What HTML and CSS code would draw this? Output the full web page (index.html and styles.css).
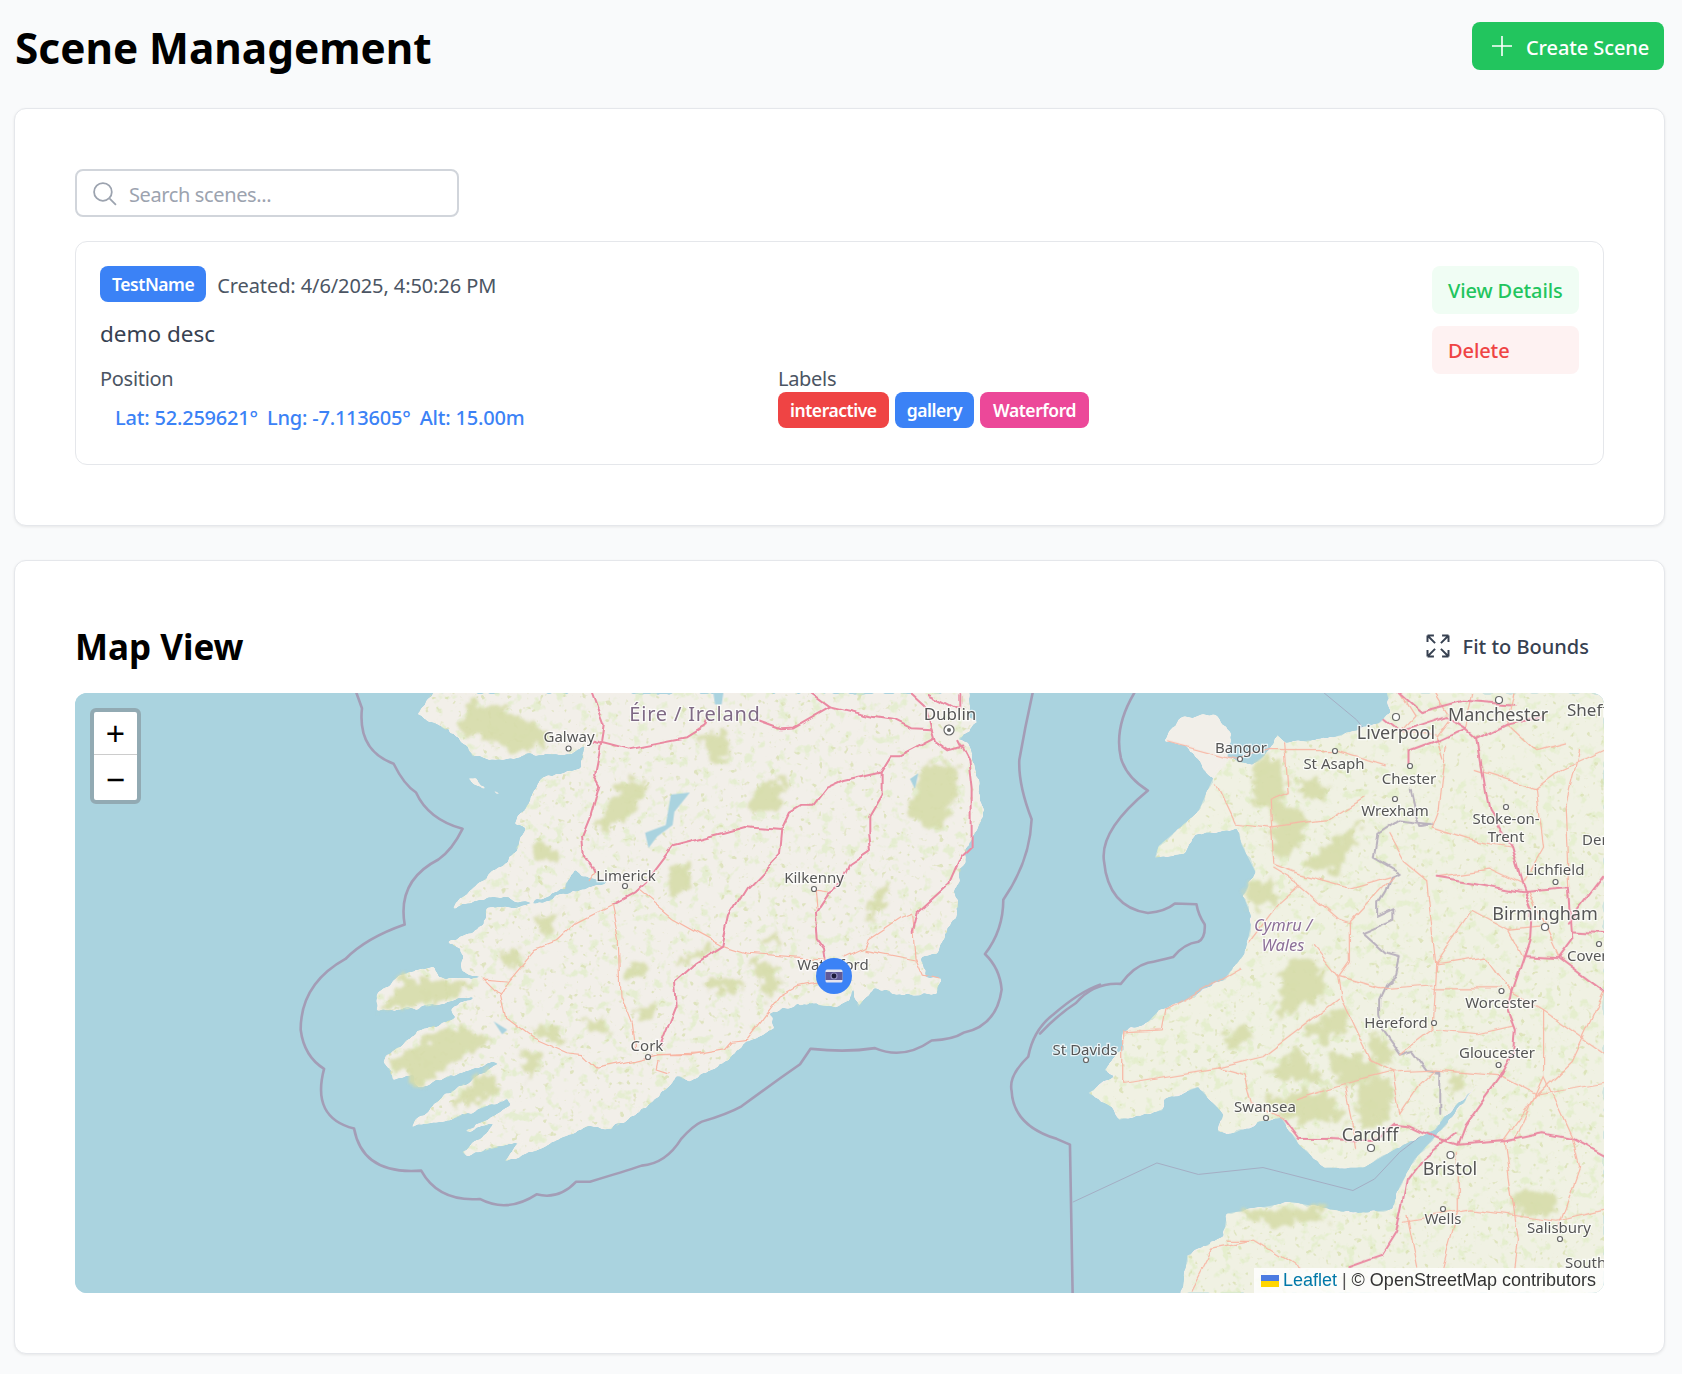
FILE: index.html
```html
<!DOCTYPE html>
<html lang="en">
<head>
<meta charset="utf-8">
<title>Scene Management</title>
<link rel="stylesheet" href="styles.css">
</head>
<body>
<header class="page-head">
  <h1 class="page-title">Scene Management</h1>
  <button class="create-btn">
    <svg class="plus-icon" viewBox="0 0 24 24"><path d="M12 2v20M2 12h20"/></svg>
    <span>Create Scene</span>
  </button>
</header>

<section class="panel">
  <label class="search">
    <svg class="search-icon" viewBox="0 0 24 24"><circle cx="10.5" cy="10.5" r="8.5"/><path d="M17 17l6 6"/></svg>
    <span class="search-text">Search scenes...</span>
  </label>
  <article class="scene">
    <div class="scene-main">
      <div class="scene-top">
        <span class="tag tag-blue">TestName</span>
        <span class="created">Created: 4/6/2025, 4:50:26 PM</span>
      </div>
      <p class="desc">demo desc</p>
      <div class="scene-cols">
        <div>
          <div class="col-label">Position</div>
          <div class="coords"><span>Lat: 52.259621°</span><span>Lng: -7.113605°</span><span>Alt: 15.00m</span></div>
        </div>
        <div>
          <div class="col-label">Labels</div>
          <div class="tags">
            <span class="tag tag-red">interactive</span>
            <span class="tag tag-blue">gallery</span>
            <span class="tag tag-pink">Waterford</span>
          </div>
        </div>
      </div>
    </div>
    <div class="actions">
      <button class="act act-green">View Details</button>
      <button class="act act-red">Delete</button>
    </div>
  </article>
</section>

<section class="panel map-panel">
  <div class="map-head">
    <h2 class="map-title">Map View</h2>
    <button class="fit-btn">
      <svg class="fit-icon" viewBox="0 0 24 24"><path d="M3 3v5.500M3 3h5.500M3 3l6.500 6.500M3 21v-5.500M3 21h5.500M3 21l6.500-6.500M21 3h-5.500M21 3v5.500M21 3l-6.500 6.500M21 21h-5.500M21 21v-5.500M21 21l-6.500-6.500"/></svg>
      <span>Fit to Bounds</span>
    </button>
  </div>
  <div class="map">
    <svg class="map-svg" viewBox="75 693 1529 600" preserveAspectRatio="none">
      <defs>
        <filter id="coast" x="-3%" y="-3%" width="106%" height="106%" color-interpolation-filters="sRGB">
          <feTurbulence type="fractalNoise" baseFrequency="0.09" numOctaves="3" seed="3" result="n"/>
          <feDisplacementMap in="SourceGraphic" in2="n" scale="7" xChannelSelector="R" yChannelSelector="G"/>
          <feGaussianBlur stdDeviation="1.300"/>
          <feComponentTransfer><feFuncA type="linear" slope="5" intercept="-2"/></feComponentTransfer>
        </filter>
        <filter id="soft" x="-5%" y="-5%" width="110%" height="110%" color-interpolation-filters="sRGB">
          <feTurbulence type="fractalNoise" baseFrequency="0.1" numOctaves="3" seed="11" result="n"/>
          <feDisplacementMap in="SourceGraphic" in2="n" scale="22" xChannelSelector="R" yChannelSelector="G"/>
          <feGaussianBlur stdDeviation="1.600"/>
        </filter>
        <filter id="wiggle" x="-2%" y="-2%" width="104%" height="104%" color-interpolation-filters="sRGB">
          <feTurbulence type="fractalNoise" baseFrequency="0.035" numOctaves="2" seed="5" result="n"/>
          <feDisplacementMap in="SourceGraphic" in2="n" scale="9" xChannelSelector="R" yChannelSelector="G"/>
          <feGaussianBlur stdDeviation="0.350"/>
        </filter>
        <filter id="speck" x="0" y="0" width="100%" height="100%" color-interpolation-filters="sRGB">
          <feTurbulence type="fractalNoise" baseFrequency="0.09" numOctaves="3" seed="7"/>
          <feColorMatrix type="matrix" values="0 0 0 0 0.88  0 0 0 0 0.93  0 0 0 0 0.78  0 0 0 6 -3.4"/>
          <feGaussianBlur stdDeviation="0.600"/>
        </filter>
        <filter id="speck2" x="0" y="0" width="100%" height="100%" color-interpolation-filters="sRGB">
          <feTurbulence type="fractalNoise" baseFrequency="0.16" numOctaves="2" seed="21"/>
          <feColorMatrix type="matrix" values="0 0 0 0 0.84  0 0 0 0 0.87  0 0 0 0 0.68  0 0 0 9 -6"/>
          <feGaussianBlur stdDeviation="0.500"/>
        </filter>
        <polygon id="ie-west" points="440,0 395,60 430,70 520,115 560,165 650,175 720,160 840,160 880,140 875,200 760,220 720,290 680,340 715,350 690,400 650,450 620,465 490,565 620,530 730,550 830,510 850,455 880,480 960,495 830,525 750,552 600,562 590,610 520,640 485,650 525,670 530,730 590,745 560,745 460,745 445,715 350,735 280,790 280,830 400,825 570,790 490,830 510,850 400,885 300,955 330,1010 385,1000 400,1030 600,970 640,965 480,1050 430,1090 375,1130 480,1120 660,1060 670,1080 530,1150 640,1120 530,1200 540,1210 700,1170 650,1225 760,1190 900,1130 960,1140 1040,1100 1140,1020 1150,1000 1190,1015 1300,960 1340,920 1430,880 1420,840 1500,815 1568,810 1568,0"/>
        <polygon id="ie-east" points="585,0 1050,0 1045,60 1075,75 1015,125 1045,130 1075,230 1090,325 1045,400 1005,510 1015,560 1000,590 950,680 905,690 915,740 960,745 950,785 850,790 760,770 715,820 700,790 700,755 690,805 650,820 590,815"/>
        <polygon id="gb" points="965,0 975,50 940,80 800,120 680,130 660,110 640,150 590,190 530,170 480,225 440,310 330,400 320,430 400,420 430,370 550,355 560,395 600,470 565,530 590,590 570,680 510,750 390,810 330,830 290,870 230,885 230,925 180,985 210,1000 135,1045 205,1085 220,1115 340,1090 345,1060 440,1030 510,1100 495,1145 540,1150 610,1120 670,1110 720,1180 790,1240 900,1240 990,1190 1100,1140 1125,1105 1220,1020 1140,1115 1040,1220 1000,1290 980,1350 870,1360 700,1330 520,1360 510,1420 410,1470 395,1568 1568,1568 1568,0"/>
        <polygon id="anglesey" points="345,125 390,65 490,58 530,110 525,170 480,225 410,140"/>
        <clipPath id="landclip">
          <use href="#ie-west" transform="translate(280 693) scale(.3444 .3827)"/>
          <use href="#ie-east" transform="translate(620 693) scale(.3333 .3827)"/>
          <use href="#gb" transform="translate(1040 693) scale(.3597 .3827)"/>
        </clipPath>
      </defs>
      <rect class="sea" x="75" y="693" width="1529" height="600"/>

      <g class="z10">
        <path class="mar" d="M222,0 L238,40 Q225,150 330,185 Q360,240 395,260 Q430,330 530,355 Q500,410 460,435 Q340,490 362,605 Q250,640 190,695 Q60,760 60,880 Q70,950 128,982 Q90,1110 215,1138 Q240,1260 410,1248 Q460,1330 580,1322 Q660,1360 745,1310 Q810,1325 860,1277 L900,1277 Q1000,1250 1050,1235 Q1120,1230 1165,1165 Q1200,1130 1225,1120 Q1300,1100 1340,1080 Q1430,1020 1510,970 L1540,930"/>
      </g>
      <g class="z11">
        <path class="mar" d="M575,930 Q680,940 765,928 Q850,960 935,908 Q1000,905 1030,888 Q1130,870 1145,775 Q1140,720 1095,682 Q1150,620 1150,540 Q1230,440 1235,330 Q1195,240 1198,175 Q1215,90 1238,0"/>
        <path class="mar" d="M1440,762 Q1380,780 1300,840 Q1240,880 1225,950 Q1165,1000 1175,1040 Q1180,1130 1310,1165 L1350,1180 L1358,1568"/>
      </g>
      <g class="z12">
        <path class="mar" d="M262,0 Q205,90 225,170 Q240,220 300,255 Q165,360 178,440 Q190,560 300,575 Q350,570 375,550 L435,552 Q440,580 458,605 Q460,640 440,650 Q400,655 370,690 Q330,700 300,705 Q260,715 225,760 Q150,755 100,810 Q50,840 0,890"/>
        <polyline class="thin-mar" points="92,1330 325,1228 440,1258 620,1240 870,1300 930,1270 1000,1200 1110,1120"/>
        <polyline class="thin-mar" points="790,0 880,70 950,150"/>
      </g>

      <g class="land" filter="url(#coast)">
        <use href="#ie-west" transform="translate(280 693) scale(.3444 .3827)"/>
        <use href="#ie-east" transform="translate(620 693) scale(.3333 .3827)"/>
        <use href="#gb" transform="translate(1040 693) scale(.3597 .3827)"/>
        <use href="#anglesey" transform="translate(1040 693) scale(.3597 .3827)"/>
        <g class="z10">
          <polygon points="530,218 570,225 605,250 580,245"/><polygon points="615,250 635,262 625,268"/><polygon points="645,268 658,275 648,278"/>
          <polygon points="650,1225 675,1210 660,1222"/>
        </g>
      </g>
      <use class="gb-tint" href="#gb" transform="translate(1040 693) scale(.3597 .3827)"/>
      <rect class="speck-layer" x="75" y="693" width="1529" height="600" filter="url(#speck)" clip-path="url(#landclip)"/>
      <rect class="speck-layer" x="75" y="693" width="1529" height="600" filter="url(#speck2)" clip-path="url(#landclip)"/>

      <g class="greens" filter="url(#soft)">
        <g class="z10">
          <polygon points="550,20 640,40 760,90 790,130 680,160 600,120 520,110"/>
          <polygon points="1000,220 1060,240 1040,300 950,360 920,350 960,280"/>
          <polygon points="1420,230 1470,250 1420,310 1370,320 1370,270"/>
          <polygon points="740,395 790,400 810,440 730,440"/>
          <polygon points="350,735 400,750 570,760 480,805 290,830 340,770"/>
          <polygon points="500,870 620,900 520,960 400,1030 310,960"/>
          <polygon points="600,980 650,1040 500,1085 530,1040"/>
          <polygon points="1150,700 1250,660 1270,670 1200,700 1150,710"/>
          <polygon points="1000,710 1070,720 1060,745 1010,740"/>
          <polygon points="1230,745 1340,750 1320,790 1240,770"/>
          <polygon points="1360,700 1450,710 1450,770 1410,800 1390,740"/>
          <polygon points="730,870 810,875 820,910 750,900"/>
          <polygon points="880,860 950,850 950,880 900,890"/>
          <polygon points="1030,820 1090,815 1090,850 1040,860"/>
          <polygon points="1130,450 1190,440 1200,510 1130,530"/>
          <polygon points="700,930 760,950 720,1015"/>
          <polygon points="640,680 700,670 690,720 650,720"/>
          <polygon points="740,580 810,570 800,620 760,630"/>
        </g>
        <g class="z11">
          <polygon points="920,180 1010,190 1000,280 950,370 860,310"/>
          <polygon points="400,240 500,225 480,300 390,320"/>
          <polygon points="760,510 810,500 770,580 740,610"/>
          <polygon points="430,630 480,625 470,655 430,655"/>
          <polygon points="230,110 300,100 340,170 270,180"/>
        </g>
        <g class="z12">
          <polygon points="600,180 670,170 690,260 640,300 590,280"/>
          <polygon points="710,225 800,235 790,280 720,265"/>
          <polygon points="640,280 740,310 730,400 650,440"/>
          <polygon points="720,450 900,330 830,470"/>
          <polygon points="570,510 650,480 660,540 590,570"/>
          <polygon points="680,700 770,690 800,780 660,860"/>
          <polygon points="730,880 840,820 870,870 790,910"/>
          <polygon points="520,880 580,860 580,920 520,930"/>
          <polygon points="630,1000 720,930 800,1030"/>
          <polygon points="800,940 920,960 960,1000 830,1030"/>
          <polygon points="620,1060 800,1040 850,1120 720,1120"/>
          <polygon points="880,1020 980,1000 970,1120 890,1130"/>
          <polygon points="920,890 970,910 980,980 920,960"/>
          <polygon points="1140,990 1180,990 1180,1040 1140,1040"/>
          <polygon points="540,1360 780,1340 800,1380 650,1390"/>
          <polygon points="1310,1310 1440,1300 1430,1370 1320,1350"/>
        </g>
      </g>

      <g class="water-bits">
        <g class="z10"><polygon points="1135,265 1190,260 1145,310 1140,345 1095,375 1070,405 1060,365 1120,345"/><polygon points="620,858 660,880 645,892"/></g>
        <g class="z11"><polygon points="280,0 310,0 305,30 285,30"/><polygon points="870,225 895,210 885,250"/></g>
      </g>

      <g filter="url(#wiggle)">
        <g class="z10">
          <polyline class="rd2" points="1040,515 1140,590 1220,630 1285,662"/>
          <polyline class="rd2" points="965,550 985,640 990,790 1020,860 1030,930"/>
          <polyline class="rd2" points="970,550 860,600 800,650 740,670 665,750 640,790 590,745 660,750"/>
          <polyline class="rd2" points="640,790 655,850 730,900 830,940 880,945 920,980 1030,960 1100,945 1230,940"/>
          <polyline class="rd2" points="1100,960 1095,980 1130,990"/>
          <polyline class="rd2" points="895,490 910,470"/>
          <polyline class="rd1" points="910,125 1010,148 1180,118 1230,90 1240,70"/>
          <polyline class="rd1" points="905,0 940,85 925,170 915,215 930,240 905,320 880,375 885,430 910,470"/>
          <polyline class="rd1" points="970,550 1030,520 1060,495 1140,400 1290,365 1350,350 1458,358"/>
        </g>
        <g class="z11">
          <polyline class="rd2" points="310,660 380,680 530,690 620,695"/>
          <polyline class="rd2" points="675,690 735,665 745,645 840,590 875,578 885,690 910,740 955,750"/>
          <polyline class="rd2" points="735,670 885,695"/>
          <polyline class="rd2" points="590,755 530,765 480,790 420,860 380,905 330,910 310,930 210,945 110,945"/>
          <polyline class="rd2" points="580,515 585,560"/><polyline class="rd2" points="580,515 620,520"/>
          <polyline class="rd1" points="415,72 480,92 520,90 630,35 760,62 820,70 870,92 935,95"/>
          <polyline class="rd1" points="575,0 630,35"/>
          <polyline class="rd1" points="870,0 920,40 935,95"/><polyline class="rd1" points="925,0 1015,40 1015,0"/>
          <polyline class="rd1" points="935,95 945,125 985,150 1030,140"/>
          <polyline class="rd1" points="487,357 510,315 545,297 578,297 620,250 670,230 785,208 815,165 840,165 940,120"/>
          <polyline class="rd1" points="487,357 480,420 380,510 330,580 310,660 230,705 165,755 170,815 120,925"/>
          <polyline class="rd1" points="785,208 785,260 745,320 745,380 750,415 690,450 665,500 620,525 585,570 590,640 615,670 620,700"/>
          <polyline class="rd1" points="1015,125 1045,175 1055,250 1055,400 1020,430 985,500 890,575 875,630"/>
        </g>
        <g class="z12">
          <polyline class="border" points="1028,250 1040,300 1060,345 1090,340 1000,330 935,370 925,430 1000,470 975,480 960,520 940,550 940,585 985,565 985,595 900,630 960,680 1000,690 990,735 960,760 940,800 940,840 950,880 1000,945 1035,935 1075,985 1110,990 1110,1100"/>
          <polyline class="rd2" points="355,125 550,175 640,150 820,150 960,190"/>
          <polyline class="rd2" points="490,240 540,340 640,350 800,330 900,270"/>
          <polyline class="rd2" points="680,130 690,260 640,280 650,450 720,475 860,510 970,480"/>
          <polyline class="rd2" points="650,460 720,500 660,550 580,650"/>
          <polyline class="rd2" points="720,500 830,590 860,600 980,480"/>
          <polyline class="rd2" points="860,600 860,700 830,740 840,800 880,880 920,960 980,990 1100,985"/>
          <polyline class="rd2" points="760,660 830,740 940,770 1090,760"/>
          <polyline class="rd2" points="830,800 620,950 490,980 230,1020 230,885 340,880 350,830 560,720"/>
          <polyline class="rd2" points="490,980 570,1000 590,1070 680,1115"/>
          <polyline class="rd2" points="710,1060 850,1020 980,990 1000,1100"/>
          <polyline class="rd2" points="850,1030 870,1120 880,1190"/>
          <polyline class="rd2" points="1075,490 1100,710 1090,880 1000,945"/>
          <polyline class="rd2" points="970,370 1010,440 1075,490"/>
          <polyline class="rd2" points="1100,710 1240,690 1310,780"/>
          <polyline class="rd2" points="1090,770 1280,770"/>
          <polyline class="rd2" points="1100,880 1220,890 1315,870"/>
          <polyline class="rd2" points="1280,1000 1380,1050 1568,1020"/>
          <polyline class="rd2" points="1380,1050 1480,960 1568,780"/>
          <polyline class="rd2" points="1310,780 1400,830 1568,940"/>
          <polyline class="rd2" points="1400,1000 1320,1170"/>
          <polyline class="rd2" points="1340,500 1250,460 1100,480"/>
          <polyline class="rd2" points="1010,1380 1200,1350 1440,1380 1568,1350"/>
          <polyline class="rd2" points="1440,1400 1500,1240 1480,1165"/>
          <polyline class="rd2" points="1160,1200 1160,1360 1120,1500"/>
          <polyline class="rd2" points="1290,1170 1330,1430 1320,1500"/>
          <polyline class="rd2" points="1130,130 1110,300 1090,350 1190,380 1310,400"/>
          <polyline class="rd2" points="1210,200 1380,250 1450,200 1568,150"/>
          <polyline class="rd2" points="1380,250 1400,400 1340,500"/>
          <polyline class="rd2" points="1470,510 1460,300 1500,150"/>
          <polyline class="rd2" points="520,1430 600,1430 720,1500"/>
          <polyline class="rd2" points="590,1430 480,1450 420,1560"/>
          <polyline class="rd2" points="1000,0 1040,60 1000,100 1100,110"/>
          <polyline class="rd2" points="1100,0 1140,60 1100,110 1120,170"/>
          <polyline class="rd2" points="1200,0 1180,90"/><polyline class="rd2" points="1320,0 1300,80 1380,150 1460,130"/>
          <polyline class="rd2" points="1340,690 1300,620 1200,570 1100,710"/>
          <polyline class="rd2" points="1400,610 1360,520"/><polyline class="rd2" points="1400,610 1440,690"/><polyline class="rd2" points="1400,610 1300,620"/>
          <polyline class="rd2" points="1000,1100 1050,1030 1100,985 1280,1000"/>
          <polyline class="rd2" points="1160,1180 1290,1170 1380,1050"/>
          <polyline class="rd2" points="1480,1165 1400,1000 1400,830"/>
          <polyline class="rd2" points="1050,1500 1020,1360"/>
          <polyline class="rd1" points="1215,120 1240,260 1250,310 1310,400 1340,500 1365,560 1360,640 1310,780 1300,830 1320,880 1315,940 1280,1000 1180,1130 1160,1180 1110,1165 1030,1130 980,1125 920,1170 800,1165 720,1165 680,1115"/>
          <polyline class="rd1" points="1150,1150 1060,1220 1020,1270 1010,1320 990,1410 950,1470 860,1500"/>
          <polyline class="rd1" points="1160,1180 1300,1170 1400,1150 1480,1165 1568,1210"/>
          <polyline class="rd1" points="1100,480 1200,495 1340,520 1470,510 1480,640 1440,690 1568,780"/>
          <polyline class="rd1" points="1345,685 1440,690"/><polyline class="rd1" points="1480,620 1568,625"/><polyline class="rd1" points="1470,600 1568,480"/>
          <polyline class="rd1" points="1030,190 1030,150 1100,125 1180,90 1215,120 1300,80 1400,60"/>
          <polyline class="rd1" points="960,70 1000,100 1130,60 1180,90"/>
          <polyline class="rd1" points="1000,0 1060,50 1180,20 1320,30"/>
        </g>
      </g>

      <g class="dots">
        <circle cx="568.600" cy="748.500" r="2.500"/><circle cx="625" cy="886" r="2.500"/><circle cx="814" cy="889" r="2.500"/><circle cx="648" cy="1057" r="2.500"/><circle cx="1086" cy="1060" r="2.500"/><circle cx="1240" cy="759" r="2.500"/><circle cx="1335" cy="751" r="2.500"/><circle cx="1410" cy="766" r="2.500"/><circle cx="1395" cy="799" r="2.500"/><circle cx="1506" cy="807" r="2.500"/><circle cx="1555.500" cy="882" r="2.500"/><circle cx="1599" cy="944" r="2.500"/><circle cx="1501.500" cy="991" r="2.500"/><circle cx="1434" cy="1023" r="2.500"/><circle cx="1498.600" cy="1065" r="2.500"/><circle cx="1266" cy="1118" r="2.500"/><circle cx="1443" cy="1209" r="2.500"/><circle cx="1560" cy="1239" r="2.500"/>
        <circle cx="1396" cy="717" r="3.500"/><circle cx="1499" cy="700" r="3.500"/><circle cx="1545" cy="927" r="3.500"/><circle cx="1371" cy="1148" r="3.500"/><circle cx="1450.500" cy="1155" r="3.500"/>
        <circle cx="949" cy="730" r="5"/><circle class="dot-core" cx="949" cy="730" r="2"/>
      </g>

      <g class="labels">
        <text class="lb-country" x="695" y="721">Éire / Ireland</text>
        <text class="lb" x="569" y="742">Galway</text>
        <text class="lb" x="626" y="881">Limerick</text>
        <text class="lb" x="814" y="883">Kilkenny</text>
        <text class="lb" x="833" y="970">Waterford</text>
        <text class="lb" x="647" y="1051">Cork</text>
        <text class="lb-m" x="950" y="720">Dublin</text>
        <text class="lb" x="1085" y="1055">St Davids</text>
        <text class="lb" x="1241" y="753">Bangor</text>
        <text class="lb" x="1334" y="769">St Asaph</text>
        <text class="lb" x="1409" y="784">Chester</text>
        <text class="lb-l" x="1396" y="739">Liverpool</text>
        <text class="lb-l" x="1498" y="721">Manchester</text>
        <text class="lb-m lb-start" x="1567" y="716">Sheffield</text>
        <text class="lb" x="1395" y="816">Wrexham</text>
        <text class="lb" x="1506" y="824">Stoke-on-</text>
        <text class="lb" x="1506" y="842">Trent</text>
        <text class="lb lb-start" x="1582" y="845">Derby</text>
        <text class="lb" x="1555" y="875">Lichfield</text>
        <text class="lb-l" x="1545" y="920">Birmingham</text>
        <text class="lb lb-start" x="1567" y="961">Coventry</text>
        <text class="lb-region" x="1283" y="931">Cymru /</text>
        <text class="lb-region" x="1283" y="951">Wales</text>
        <text class="lb" x="1501" y="1008">Worcester</text>
        <text class="lb" x="1396" y="1028">Hereford</text>
        <text class="lb" x="1497" y="1058">Gloucester</text>
        <text class="lb" x="1265" y="1112">Swansea</text>
        <text class="lb-l" x="1370" y="1141">Cardiff</text>
        <text class="lb-l" x="1450" y="1175">Bristol</text>
        <text class="lb" x="1443" y="1224">Wells</text>
        <text class="lb" x="1559" y="1233">Salisbury</text>
        <text class="lb lb-start" x="1565" y="1268">Southampton</text>
      </g>
    </svg>

    <div class="zoom">
      <span class="zoom-btn zoom-plus">+</span>
      <span class="zoom-btn zoom-minus">−</span>
    </div>

    <div class="pin">
      <svg class="pin-icon" viewBox="0 0 18 14">
        <rect class="cam-top" x="0.500" y="0.500" width="17" height="13" rx="1.500"/>
        <rect class="cam-band" x="0.500" y="3" width="17" height="8"/>
        <circle class="cam-ring" cx="9" cy="7" r="3.600"/>
        <circle class="cam-lens" cx="9" cy="7" r="2.400"/>
      </svg>
    </div>

    <div class="attrib">
      <svg class="flag" viewBox="0 0 12 8"><rect width="12" height="4" fill="#4C7BE1"/><rect y="4" width="12" height="4" fill="#FFD500"/></svg>
      <a class="attrib-link">Leaflet</a><span class="attrib-sep">|</span><span>© OpenStreetMap contributors</span>
    </div>
  </div>
</section>
</body>
</html>
```
FILE: styles.css
```css
* { box-sizing: border-box; }
html, body { margin: 0; }
body {
  background: #f9fafb;
  color: #000;
  font-family: "Noto Sans", "Open Sans", sans-serif;
  padding: 0 17px 20px 14px;
}
button { font-family: inherit; border: 0; cursor: pointer; }

.page-head {
  display: flex;
  align-items: center;
  justify-content: space-between;
  height: 108px;
  padding-bottom: 16px;
}
.page-title {
  margin: 4px 0 0 1px;
  font-size: 42.300px;
  font-weight: 700;
  line-height: 52px;
  letter-spacing: 0;
}
.create-btn {
  display: flex;
  align-items: center;
  gap: 12px;
  width: 192px;
  height: 48px;
  margin-right: 1px;
  padding: 2px 0 0 18px;
  border-radius: 8px;
  background: #22c55e;
  color: #fff;
  font-size: 20px;
  font-weight: 500;
  letter-spacing: -0.1px;
  white-space: nowrap;
}
.plus-icon { width: 24px; height: 24px; margin-top: -2px; fill: none; stroke: #fff; stroke-width: 1.6; }

.panel {
  background: #fff;
  border: 1px solid #e5e7eb;
  border-radius: 12px;
  box-shadow: 0 1px 3px rgba(0, 0, 0, .08);
  padding: 60px;
  height: 418px;
}
.map-panel { height: 794px; margin-top: 34px; }

.search {
  display: flex;
  align-items: center;
  gap: 12px;
  width: 384px;
  height: 48px;
  padding-left: 16px;
  border: 2px solid #d1d5db;
  border-radius: 8px;
}
.search-icon { width: 25px; height: 25px; margin-left: -1px; fill: none; stroke: #9ca3af; stroke-width: 1.7; }
.search-text { margin-top: 2px; color: #9ca3af; font-size: 20px; letter-spacing: -0.38px; }

.scene {
  display: flex;
  margin-top: 24px;
  height: 224px;
  padding: 24px;
  border: 1px solid #e5e7eb;
  border-radius: 12px;
}
.scene-main { flex: 1; min-width: 0; }
.scene-top { display: flex; align-items: center; gap: 11px; height: 36px; }
.tag {
  display: inline-flex;
  align-items: center;
  height: 36px;
  padding: 0 12px;
  border-radius: 8px;
  color: #fff;
  font-size: 17.500px;
  font-weight: 600;
  letter-spacing: -0.45px;
  white-space: nowrap;
}
.tag-blue { background: #3b82f6; }
.tag-red { background: #ef4444; }
.tag-pink { background: #ec4899; }
.created { margin-top: 3px; color: #4b5563; font-size: 20px; letter-spacing: -0.1px; }
.desc { margin: 15px 0 0; color: #374151; font-size: 22.500px; line-height: 34px; letter-spacing: 0; }
.scene-cols { display: grid; grid-template-columns: 1fr 1fr; gap: 24px; margin-top: 15px; }
.col-label { color: #4b5563; font-size: 20px; line-height: 26px; letter-spacing: -0.3px; }
.coords {
  display: flex;
  gap: 9px;
  margin-top: 12px;
  padding-left: 15px;
  color: #3b82f6;
  font-size: 20px;
  font-weight: 500;
  line-height: 28px;
  letter-spacing: -0.2px;
}
.tags { display: flex; gap: 6px; }
.tags .tag-pink { padding: 0 13px; }
.actions { display: flex; flex-direction: column; gap: 12px; width: 147px; }
.act {
  height: 48px;
  padding: 0 16px;
  border-radius: 8px;
  font-size: 20px;
  font-weight: 500;
  letter-spacing: -0.1px;
  text-align: left;
  white-space: nowrap;
}
.act-green { background: #f0fdf4; color: #22c55e; }
.act-red { background: #fef2f2; color: #ef4444; }

.map-head {
  display: flex;
  align-items: center;
  justify-content: space-between;
  height: 72px;
  padding-bottom: 20px;
}
.map-title { margin: 0; font-size: 35px; font-weight: 700; line-height: 52px; letter-spacing: 0; }
.fit-btn {
  display: flex;
  align-items: center;
  gap: 11px;
  margin-top: -2px;
  padding: 0 15px 0 0;
  background: none;
  color: #374151;
  font-size: 20px;
  font-weight: 500;
  letter-spacing: 0;
}
.fit-icon { width: 28px; height: 28px; fill: none; stroke: #374151; stroke-width: 1.7; }

.map {
  position: relative;
  height: 600px;
  overflow: hidden;
  border-radius: 12px;
  background: #aad3df;
}
.map-svg { display: block; width: 100%; height: 100%; }
.sea { fill: #aad3df; }
.z10 { transform: translate(280px, 693px) scale(.3444, .3827); }
.z11 { transform: translate(620px, 693px) scale(.3333, .3827); }
.z12 { transform: translate(1040px, 693px) scale(.3597, .3827); }
.land { fill: #f2efe9; }
.gb-tint { fill: #eef3de; opacity: .55; }
.speck-layer { opacity: .7; }
.greens { fill: #d6dcaa; opacity: .9; }
.water-bits { fill: #aad3df; }
polyline, .mar { fill: none; vector-effect: non-scaling-stroke; stroke-linejoin: round; stroke-linecap: round; }
.mar { stroke: #a39db6; stroke-width: 2.6; }
.thin-mar { stroke: #a4aec4; stroke-width: 1; }
.rd1 { stroke: #ea8aa2; stroke-width: 2; }
.rd2 { stroke: #f8b6a4; stroke-width: 1.2; }
.border { stroke: #b9b1bd; stroke-width: 2; }
.dots circle { fill: #fff; stroke: #666; stroke-width: 1.200; }
.dots .dot-core { fill: #666; stroke: none; }
.labels text {
  fill: #555;
  font-family: "Noto Sans", sans-serif;
  text-anchor: middle;
  paint-order: stroke;
  stroke: rgba(255, 255, 255, .75);
  stroke-width: 2.500px;
}
.labels .lb { font-size: 15px; }
.labels .lb-m { font-size: 17px; }
.labels .lb-l { font-size: 18px; }
.labels .lb-start { text-anchor: start; }
.labels .lb-country { fill: #7f6a85; font-size: 20px; letter-spacing: .8px; }
.labels .lb-region { fill: #8c6f98; font-size: 16.500px; font-style: italic; }

.zoom {
  position: absolute;
  left: 15px;
  top: 15px;
  display: flex;
  flex-direction: column;
  width: 51px;
  height: 96px;
  overflow: hidden;
  border: 4px solid #92aab3;
  border-radius: 6px;
  background: #fff;
}
.zoom-btn {
  display: flex;
  flex: 1;
  align-items: center;
  justify-content: center;
  color: #000;
  font-family: "Liberation Sans", sans-serif;
  font-size: 33px;
  line-height: 1;
}
.zoom-plus { border-bottom: 1px solid #ccc; }
.zoom-minus { padding-top: 3px; }

.pin {
  position: absolute;
  left: 741px;
  top: 265px;
  display: flex;
  align-items: center;
  justify-content: center;
  width: 36px;
  height: 36px;
  border-radius: 50%;
  background: #3b82f6;
}
.pin-icon { width: 18px; height: 14px; }
.cam-top { fill: #e5e4ee; }
.cam-band { fill: #5f5a98; }
.cam-ring { fill: #8f8cc0; }
.cam-lens { fill: #1c1a3a; }

.attrib {
  position: absolute;
  right: 0;
  bottom: 0;
  display: flex;
  align-items: center;
  height: 25px;
  padding: 0 8px 0 7px;
  background: rgba(255, 255, 255, .8);
  color: #333;
  font-family: "Liberation Sans", Arial, sans-serif;
  font-size: 18px;
  white-space: nowrap;
}
.flag { width: 18px; height: 12px; margin-right: 4px; }
.attrib-link { color: #0078a8; }
.attrib-sep { margin: 0 5px; color: #555; }
```
